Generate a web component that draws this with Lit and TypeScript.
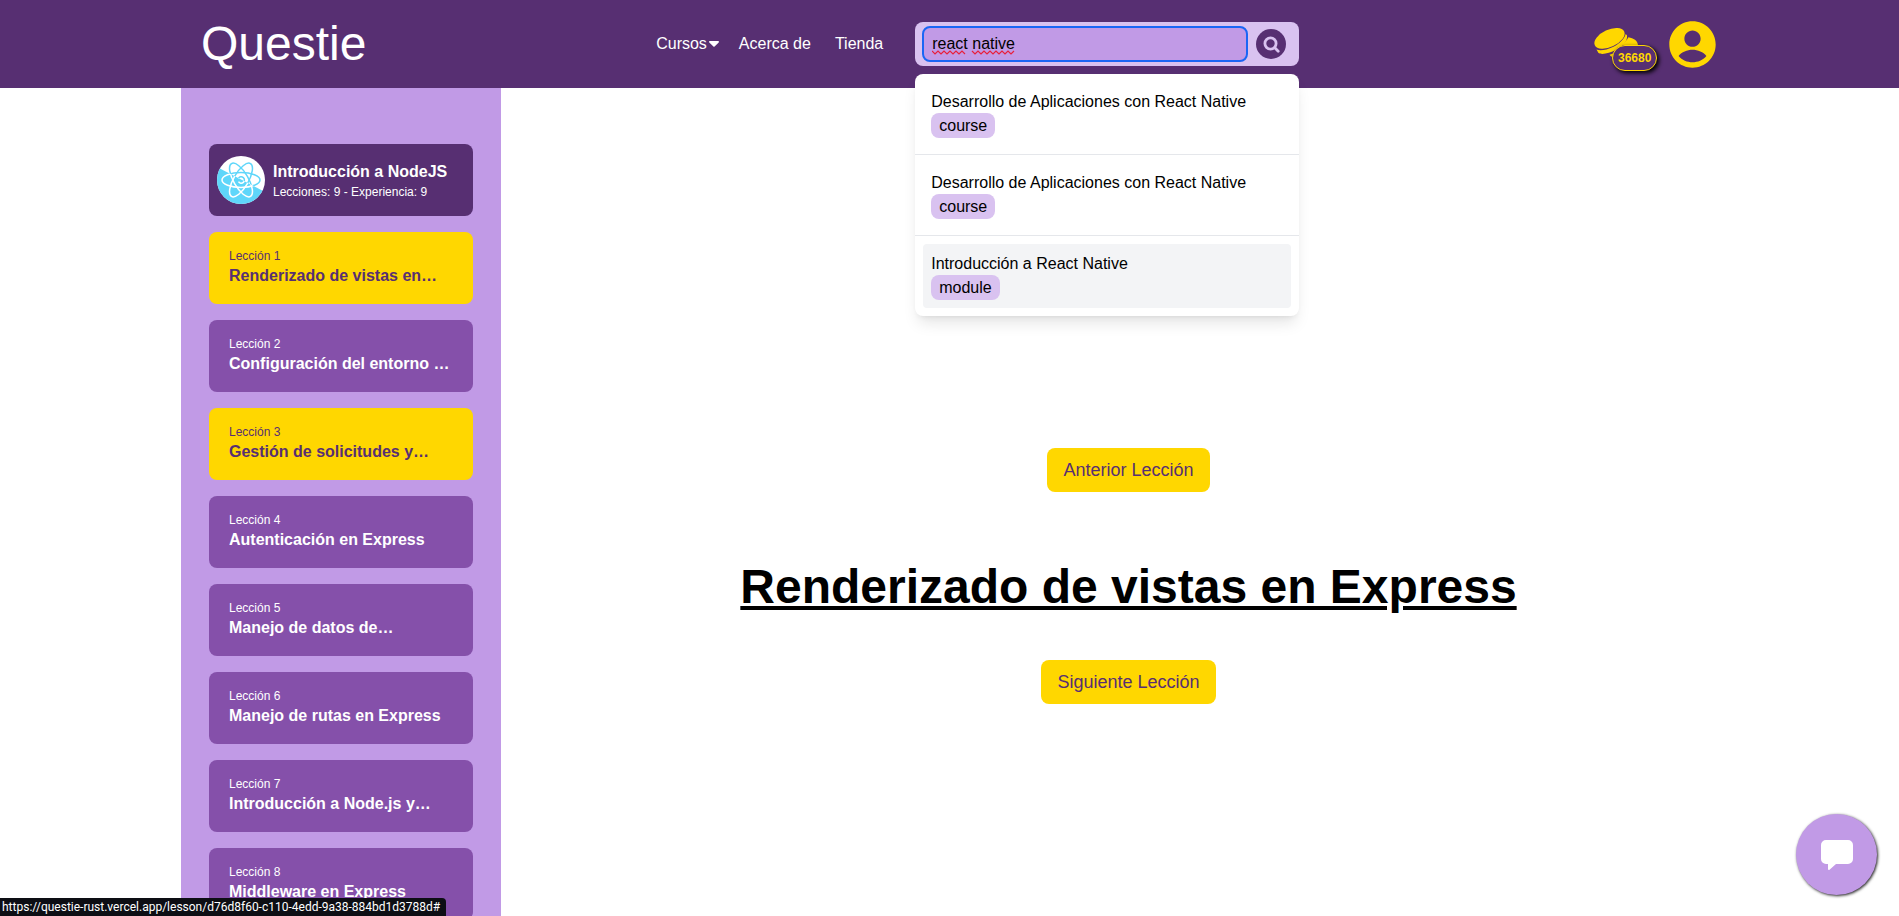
import { LitElement, html, css, svg } from "lit";
import { customElement, state } from "lit/decorators.js";
import { classMap } from "lit/directives/class-map.js";

interface Lesson {
  title: string;
  done?: boolean;
}

interface Result {
  title: string;
  kind: string;
  active?: boolean;
}

const lessons: Lesson[] = [
  { title: "Renderizado de vistas en…", done: true },
  { title: "Configuración del entorno …" },
  { title: "Gestión de solicitudes y…", done: true },
  { title: "Autenticación en Express" },
  { title: "Manejo de datos de…" },
  { title: "Manejo de rutas en Express" },
  { title: "Introducción a Node.js y…" },
  { title: "Middleware en Express" },
];

const results: Result[] = [
  { title: "Desarrollo de Aplicaciones con React Native", kind: "course" },
  { title: "Desarrollo de Aplicaciones con React Native", kind: "course" },
  { title: "Introducción a React Native", kind: "module", active: true },
];

const atom = svg`
  ${[0, 60, 120].map(
    (angle) =>
      svg`<ellipse cx="24" cy="24" rx="19" ry="7.400" transform="rotate(${angle} 24 24)"></ellipse>`
  )}
  <path d="M21.500 22.300a3.200 3.200 0 1 1 0 3.400"></path>
`;

@customElement("questie-header")
class QuestieHeader extends LitElement {
  @state() private query = "react native";

  static styles = css`
    :host {
      display: block;
      background: #572f72;
      color: #fff;
    }
    .bar {
      box-sizing: border-box;
      max-width: 1537px;
      height: 88px;
      margin: 0 auto;
      padding-left: 20px;
      display: flex;
      align-items: center;
      justify-content: space-between;
    }
    a {
      color: inherit;
      text-decoration: none;
    }
    button {
      border: 0;
      padding: 0;
      background: none;
      color: inherit;
      font: inherit;
      cursor: pointer;
    }
    svg {
      display: block;
    }
    .logo {
      font-size: 48px;
      line-height: 56px;
    }
    .middle {
      display: flex;
      align-items: center;
      gap: 28px;
    }
    .nav {
      display: flex;
      align-items: center;
      gap: 16px;
    }
    .nav a {
      padding: 0 4px;
    }
    .menu {
      display: flex;
      align-items: center;
      gap: 2px;
      line-height: 24px;
    }
    .search {
      position: relative;
      width: 384px;
    }
    .field {
      box-sizing: border-box;
      height: 44px;
      padding: 4px 13px 4px 7px;
      display: flex;
      align-items: center;
      gap: 8px;
      border-radius: 8px;
      background: #d9c2f0;
    }
    .entry {
      position: relative;
      flex: 1;
    }
    input {
      display: block;
      box-sizing: border-box;
      width: 100%;
      height: 36px;
      padding: 0 8px;
      border: 2px solid #1a66f5;
      border-radius: 8px;
      outline: none;
      background: #c19ae6;
      color: #000;
      font: inherit;
    }
    .marks {
      position: absolute;
      left: 10px;
      top: 24px;
      pointer-events: none;
    }
    .go {
      width: 30px;
      height: 30px;
      display: grid;
      place-items: center;
      border-radius: 50%;
      background: #572f72;
      color: #d9c2f0;
    }
    .results {
      position: absolute;
      z-index: 2;
      top: 52px;
      left: 0;
      right: 0;
      margin: 0;
      padding: 0;
      list-style: none;
      border-radius: 8px;
      background: #fff;
      color: #000;
      box-shadow: 0 10px 15px -3px rgba(0, 0, 0, 0.1),
        0 4px 6px -4px rgba(0, 0, 0, 0.1);
    }
    .results li {
      padding: 8px;
    }
    .results li + li {
      border-top: 1px solid #e5e7eb;
    }
    .hit {
      display: block;
      padding: 8px;
      border-radius: 4px;
      line-height: 24px;
    }
    .hit.active {
      background: #f3f4f6;
    }
    .name {
      display: block;
    }
    .kind {
      padding: 4px 8px;
      border-radius: 8px;
      background: #d9c2f0;
    }
    .account {
      display: flex;
      align-items: center;
      gap: 11px;
      color: #ffd700;
    }
    .coins {
      position: relative;
      width: 67px;
      height: 48px;
    }
    .amount {
      position: absolute;
      left: 23px;
      top: 25px;
      padding: 4px 5px;
      border: 1px solid #ffd700;
      border-radius: 13px;
      background: #572f72;
      box-shadow: 2px 2px 4px #000;
      font-size: 12px;
      font-weight: 700;
      line-height: 16px;
    }
  `;

  render() {
    return html`
      <header class="bar">
        <a class="logo" href="#">Questie</a>
        <div class="middle">
          <nav class="nav">
            <button class="menu" type="button">
              Cursos
              <svg width="10" height="6" viewBox="0 0 10 6" fill="currentColor">
                <path d="M.9 0h8.200c.8 0 1.200.9.600 1.500L5.600 5.600a.9.9 0 0 1-1.200 0L.3 1.500C-.3.9.1 0 .9 0z"></path>
              </svg>
            </button>
            <a href="#">Acerca de</a>
            <a href="#">Tienda</a>
          </nav>
          <div class="search">
            <form class="field" @submit=${(e: Event) => e.preventDefault()}>
              <div class="entry">
                <input
                  type="text"
                  aria-label="Buscar"
                  spellcheck="false"
                  .value=${this.query}
                  @input=${(e: Event) =>
                    (this.query = (e.target as HTMLInputElement).value)}
                />
                ${this.query === "react native"
                  ? html`<svg class="marks" width="84" height="5" fill="none" stroke="#e8203c" stroke-width="1.200" aria-hidden="true">
                      <path d="M0 1l3 3 3-3 3 3 3-3 3 3 3-3 3 3 3-3 3 3 3-3 3 3M40 1l3 3 3-3 3 3 3-3 3 3 3-3 3 3 3-3 3 3 3-3 3 3 3-3 3 3 3-3"></path>
                    </svg>`
                  : null}
              </div>
              <button class="go" type="submit" aria-label="Buscar">
                <svg width="17" height="17" viewBox="0 0 17 17" fill="none" stroke="currentColor" stroke-width="2.800" stroke-linecap="round">
                  <circle cx="7.500" cy="7.500" r="5.600"></circle>
                  <path d="M11.800 11.800l3.400 3.400"></path>
                </svg>
              </button>
            </form>
            <ul class="results">
              ${results.map(
                (r) => html`<li>
                  <a class=${classMap({ hit: true, active: !!r.active })} href="#">
                    <span class="name">${r.title}</span>
                    <span class="kind">${r.kind}</span>
                  </a>
                </li>`
              )}
            </ul>
          </div>
        </div>
        <div class="account">
          <div class="coins">
            <svg width="50" height="48" viewBox="-1 0 50 48" fill="currentColor">
              <ellipse cx="19.500" cy="18.300" rx="16.200" ry="8.600" transform="rotate(-25 19.500 18.300)"></ellipse>
              <path d="M6.500 29.500c3 1.300 9.500 1 17-2.800 6.500-3.300 11-8 12.200-12.700l1.300 1.200c.8 5-3.500 11-11 14.900-6.500 3.400-14.500 4.900-17.500 3z"></path>
              <path d="M38.400 17.300c5.100.8 9.200 3.300 9.600 7.700H31c3.500-2.200 6.200-4.800 7.400-7.700z"></path>
              <path d="M19.500 34.800l4.500-1.600v4c-2-.2-3.500-1-4.500-2.400z"></path>
            </svg>
            <span class="amount">36680</span>
          </div>
          <button type="button" aria-label="Perfil">
            <svg width="51" height="51" viewBox="1 1 22 22" fill="currentColor">
              <path d="M12 2C6.480 2 2 6.480 2 12s4.480 10 10 10 10-4.480 10-10S17.520 2 12 2zm0 4c1.930 0 3.500 1.570 3.500 3.500S13.930 13 12 13s-3.500-1.570-3.500-3.500S10.070 6 12 6zm0 13.700c-2.300 0-4.500-.9-6-2.700 1.300-1.700 3.700-2.700 6-2.700s4.700 1 6 2.700c-1.500 1.800-3.700 2.700-6 2.700z"></path>
            </svg>
          </button>
        </div>
      </header>
    `;
  }
}

@customElement("lesson-sidebar")
class LessonSidebar extends LitElement {
  static styles = css`
    :host {
      display: block;
      box-sizing: border-box;
      flex: 0 0 320px;
      padding: 56px 28px 0;
      overflow: hidden;
      background: #c19ae6;
    }
    .list {
      display: flex;
      flex-direction: column;
      gap: 16px;
    }
    .module,
    .lesson {
      box-sizing: border-box;
      min-height: 72px;
      border-radius: 8px;
      color: #fff;
      text-decoration: none;
    }
    .module {
      padding: 8px;
      display: flex;
      align-items: center;
      gap: 8px;
      background: #572f72;
    }
    .module svg {
      display: block;
      flex: none;
    }
    .lesson {
      display: block;
      padding: 16px 20px;
      background: #8550aa;
    }
    .lesson.done {
      background: #ffd700;
      color: #572f72;
    }
    .small {
      display: block;
      font-size: 12px;
      line-height: 16px;
    }
    .title {
      display: block;
      font-weight: 700;
      line-height: 24px;
      white-space: nowrap;
      overflow: hidden;
      text-overflow: ellipsis;
    }
  `;

  render() {
    return html`
      <nav class="list" aria-label="Lecciones">
        <div class="module">
          <svg width="48" height="48" viewBox="0 0 48 48" aria-hidden="true">
            <defs>
              <clipPath id="disc"><circle cx="24" cy="24" r="24"></circle></clipPath>
              <clipPath id="upper"><path d="M0 0h48v36L0 11z"></path></clipPath>
              <clipPath id="lower"><path d="M0 11l48 25v12H0z"></path></clipPath>
            </defs>
            <g clip-path="url(#disc)">
              <rect width="48" height="48" fill="#fff"></rect>
              <path d="M0 11l48 25v12H0z" fill="#5fd6fa"></path>
              <g fill="none" stroke-width="1.500">
                <g clip-path="url(#upper)" stroke="#5fd6fa">${atom}</g>
                <g clip-path="url(#lower)" stroke="#fff">${atom}</g>
              </g>
            </g>
          </svg>
          <div>
            <span class="title">Introducción a NodeJS</span>
            <span class="small">Lecciones: 9 - Experiencia: 9</span>
          </div>
        </div>
        ${lessons.map(
          (l, i) => html`<a
            class=${classMap({ lesson: true, done: !!l.done })}
            href="#"
          >
            <span class="small">Lección ${i + 1}</span>
            <span class="title">${l.title}</span>
          </a>`
        )}
      </nav>
    `;
  }
}

@customElement("app-root")
class AppRoot extends LitElement {
  static styles = css`
    :host {
      display: flex;
      flex-direction: column;
      position: relative;
      height: 100vh;
      overflow: hidden;
      background: #fff;
      color: #000;
      font-family: "Liberation Sans", Arial, sans-serif;
      font-size: 16px;
      line-height: 24px;
    }
    questie-header {
      position: relative;
      z-index: 1;
      flex: none;
    }
    .page {
      box-sizing: border-box;
      flex: 1;
      min-height: 0;
      width: 100%;
      max-width: 1537px;
      margin: 0 auto;
      display: flex;
    }
    .content {
      flex: 1;
      padding: 360px 0 0 38px;
      display: flex;
      flex-direction: column;
      align-items: center;
    }
    h1 {
      margin: 71px 0 49px;
      font-size: 48px;
      font-weight: 700;
      line-height: 48px;
      text-decoration: underline;
    }
    .step {
      padding: 8px 16px;
      border: 0;
      border-radius: 8px;
      background: #ffd700;
      color: #572f72;
      font: inherit;
      font-size: 18px;
      line-height: 28px;
      cursor: pointer;
    }
    .chat {
      position: absolute;
      right: 22px;
      bottom: 21px;
      width: 81px;
      height: 81px;
      padding: 0;
      display: grid;
      place-items: center;
      border: 0;
      border-radius: 50%;
      background: #c19ae6;
      color: #fff;
      box-shadow: 1px 1px 3px #222;
      cursor: pointer;
    }
    .status {
      position: absolute;
      left: 0;
      bottom: 0;
      padding: 0 6px 0 2px;
      border-radius: 0 4px 0 0;
      background: #0d0e14;
      color: #fff;
      font-family: Roboto, "Noto Sans", sans-serif;
      font-size: 12px;
      line-height: 18px;
      white-space: nowrap;
    }
  `;

  render() {
    return html`
      <questie-header></questie-header>
      <div class="page">
        <lesson-sidebar></lesson-sidebar>
        <main class="content">
          <button class="step" type="button">Anterior Lección</button>
          <h1>Renderizado de vistas en Express</h1>
          <button class="step" type="button">Siguiente Lección</button>
        </main>
      </div>
      <button class="chat" type="button" aria-label="Chat">
        <svg width="32" height="30" viewBox="0 0 32 30" fill="currentColor">
          <path d="M5 0h22a5 5 0 0 1 5 5v14a5 5 0 0 1-5 5H15l-6.500 5.700c-.7.600-1.500.2-1.500-.7v-5H5a5 5 0 0 1-5-5V5a5 5 0 0 1 5-5z"></path>
        </svg>
      </button>
      <div class="status">https://questie-rust.vercel.app/lesson/d76d8f60-c110-4edd-9a38-884bd1d3788d#</div>
    `;
  }
}
